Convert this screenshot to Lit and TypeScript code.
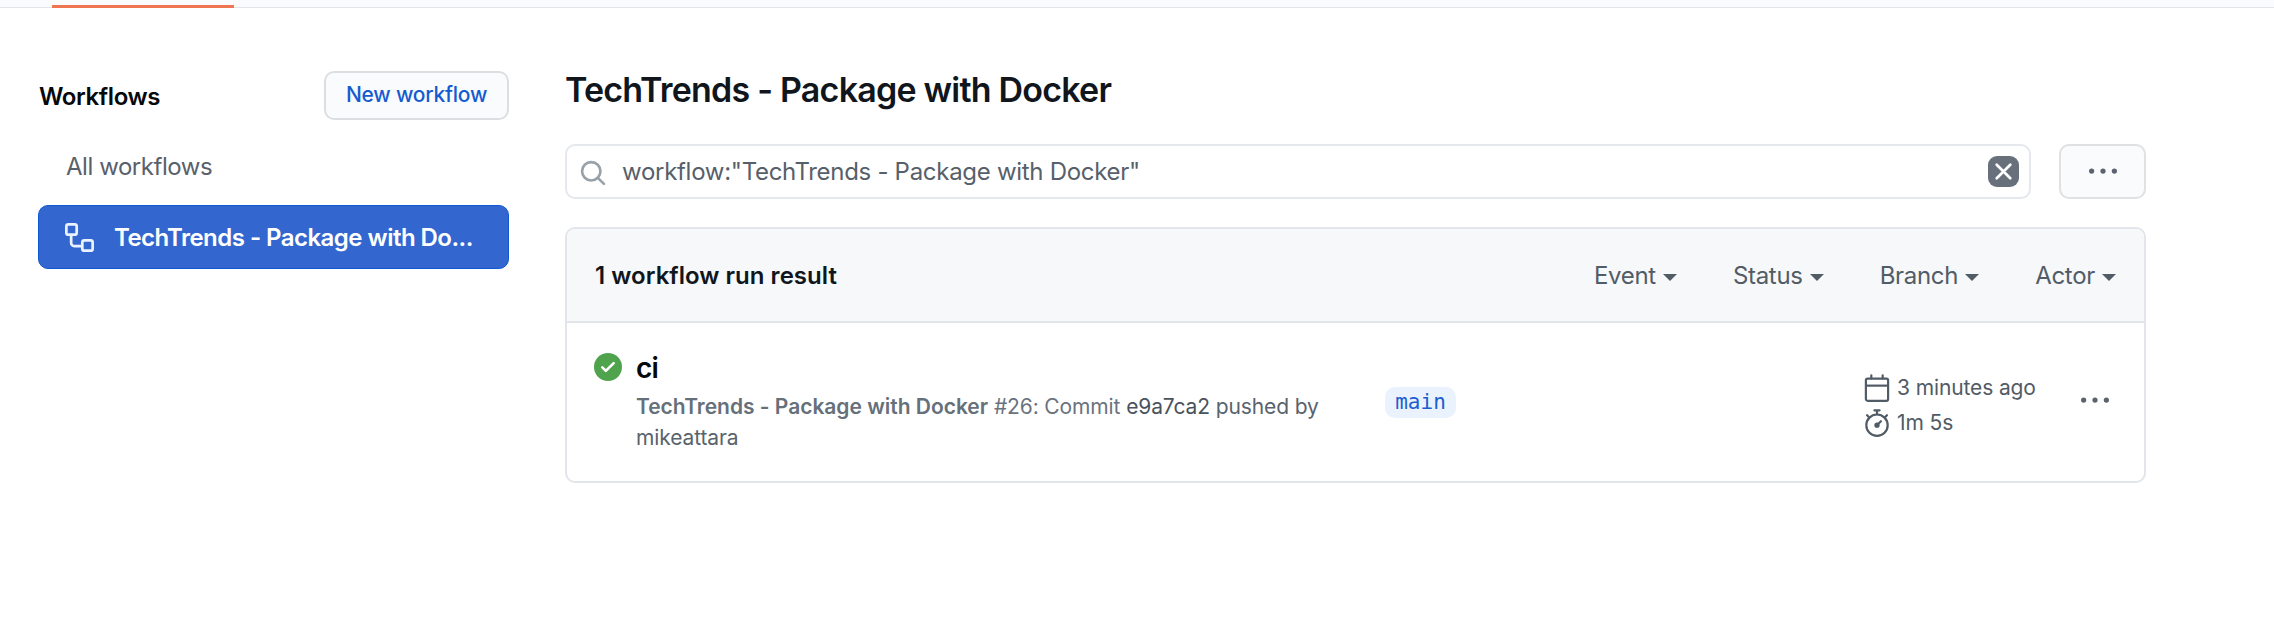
import { LitElement, html, css, svg } from "lit";
import { customElement } from "lit/decorators.js";

const filters = ["Event", "Status", "Branch", "Actor"];

const icon = (cls: string, body: unknown) =>
  html`<svg class="icon ${cls}" viewBox="0 0 16 16" fill="currentColor" aria-hidden="true">${body}</svg>`;

const workflowIcon = svg`<g fill="none" stroke="currentColor" stroke-width="1.5"><rect x=".75" y=".75" width="5.7" height="5.7" rx="1.1"/><rect x="9.55" y="9.55" width="5.7" height="5.7" rx="1.1"/><path d="M3.4 6.500V11A1.700 1.700 0 0 0 5.100 12.700H9.500"/></g>`;
const searchIcon = svg`<g fill="none" stroke="currentColor" stroke-width="1.5" stroke-linecap="round"><circle cx="7" cy="7" r="5.250"/><path d="M10.900 10.900L14.250 14.250"/></g>`;
const closeIcon = svg`<path fill="none" stroke="currentColor" stroke-width="1.5" stroke-linecap="round" d="M4.250 4.250L11.750 11.750M11.750 4.250L4.250 11.750"/>`;
const kebabIcon = svg`<circle cx="1.5" cy="8" r="1.5"/><circle cx="8" cy="8" r="1.5"/><circle cx="14.5" cy="8" r="1.5"/>`;
const checkIcon = svg`<circle cx="8" cy="8" r="8"/><path fill="none" stroke="#fff" stroke-width="1.5" stroke-linecap="round" stroke-linejoin="round" d="M4.750 8.250L6.750 10.250L11.250 5.750"/>`;
const calendarIcon = svg`<g fill="none" stroke="currentColor" stroke-width="1.25"><rect x="1.65" y="2.65" width="12.7" height="12.7" rx="1"/><path d="M1.650 6.650H14.350"/><path stroke-linecap="round" d="M4.750 .75V2.500M11.250 .75V2.500"/></g>`;
const stopwatchIcon = svg`<g fill="none" stroke="currentColor" stroke-width="1.25" stroke-linecap="round"><circle cx="8" cy="9.250" r="6.100"/><path d="M6.500 .75H9.500M8 .75V3M2.300 3.550L3.500 4.750M13.700 3.550L12.500 4.750M8.200 9.050L10.250 7"/></g><circle cx="8" cy="9.250" r="1.500"/>`;

@customElement("app-root")
export class AppRoot extends LitElement {
  static styles = css`
    :host {
      display: block;
      height: 622px;
      overflow: hidden;
      background: #fff;
      color: #10161c;
      font-family: Inter, sans-serif;
      font-size: 24px;
      line-height: 30px;
      white-space: nowrap;
    }
    * { box-sizing: border-box; }
    h1, h2, p { margin: 0; font-weight: 600; }
    button {
      font: inherit;
      color: inherit;
      margin: 0;
      padding: 0;
      border: 0;
      background: none;
    }
    .icon { display: block; flex: none; width: 28px; height: 28px; overflow: visible; }

    .nav { height: 8px; padding: 5px 0 0 52px; background: #fafbfc; border-bottom: 1px solid #e3e6e8; }
    .tab { width: 182px; height: 3px; background: #ee7650; }

    .page { display: flex; gap: 56px; padding-left: 38px; }
    .sidebar { width: 471px; padding-top: 63px; }
    .side-head { display: flex; justify-content: space-between; align-items: center; height: 49px; }
    .side-title { font-size: 24px; letter-spacing: -0.4px; padding: 3px 0 0 1px; color: #06090c; }
    .new {
      width: 185px;
      height: 49px;
      padding: 0 0 2px;
      border: 2px solid #dcdfe1;
      border-radius: 10px;
      background: #fafbfc;
      color: #155bd0;
      font-size: 21px;
      font-weight: 500;
      letter-spacing: -0.22px;
    }
    .all { display: block; margin-top: 32px; padding-left: 28px; letter-spacing: -0.45px; color: #58616b; }
    .selected {
      display: flex;
      align-items: center;
      height: 64px;
      margin-top: 23px;
      padding: 0 25px 0 26px;
      border: 1px solid #1058d0;
      border-radius: 10px;
      background: #3367cf;
      color: #fff;
      font-weight: 600;
      letter-spacing: -0.53px;
    }
    .selected span { padding-top: 1px; }
    .flow { width: 29px; height: 29px; margin-right: 20px; color: #eaf2ff; }

    .main { width: 1581px; padding-top: 62px; }
    .title { font-size: 34px; line-height: 40px; letter-spacing: -0.78px; }
    .tools { display: flex; gap: 28px; margin-top: 34px; }
    .search {
      display: flex;
      align-items: center;
      width: 1466px;
      height: 55px;
      padding: 0 10px 0 12px;
      border: 2px solid #e5e8ec;
      border-radius: 10px;
    }
    .lens { margin-top: 3px; color: #98a0a8; }
    .query { flex: 1; padding-left: 15px; letter-spacing: -0.29px; color: #57606a; }
    .clear {
      display: grid;
      place-items: center;
      width: 31px;
      height: 31px;
      border-radius: 9px;
      background: #68717b;
      color: #fff;
    }
    .x { width: 29px; height: 29px; }
    .more {
      display: grid;
      place-items: center;
      width: 87px;
      height: 55px;
      padding-bottom: 2px;
      border: 2px solid #dfe1e3;
      border-radius: 10px;
      background: #fafbfc;
      color: #5b646e;
    }

    .card { height: 256px; margin-top: 28px; border: 2px solid #e2e5e9; border-radius: 10px; overflow: hidden; }
    .card-head {
      display: flex;
      align-items: center;
      justify-content: space-between;
      height: 94px;
      padding: 1px 28px 0;
      background: #f6f8fa;
      border-bottom: 2px solid #e2e5e9;
    }
    .count { font-weight: 600; letter-spacing: 0.03px; }
    .filters { display: flex; gap: 56px; padding-top: 1px; color: #525c66; }
    .filter { display: flex; align-items: center; gap: 7px; letter-spacing: -0.3px; }
    .caret { border: 7px solid transparent; border-top-color: currentColor; border-bottom: 0; margin-top: 2px; }

    .run { display: grid; grid-template-columns: 42px 749px 478px 218px 29px; padding: 30px 0 0 27px; }
    .check { color: #4fa34c; }
    .run-title { font-size: 28px; letter-spacing: -0.8px; color: #06090c; }
    .sub { padding-top: 8px; width: 690px; font-size: 21px; font-weight: 400; line-height: 31px; letter-spacing: -0.12px; color: #6a737d; white-space: normal; }
    .sub b { font-weight: 600; letter-spacing: -0.02px; color: #66707a; }
    .sub a { color: #49535d; }
    .sub .by { color: #59636d; }
    .branch {
      justify-self: start;
      width: 71px;
      height: 31px;
      margin-top: 34px;
      border-radius: 10px;
      background: #eaf2fd;
      color: #1c5ed2;
      font: 21px/30px "DejaVu Sans Mono", monospace;
      text-align: center;
    }
    .times { padding-top: 17px; color: #515b65; font-size: 21px; letter-spacing: -0.12px; }
    .time { display: flex; align-items: center; gap: 6px; height: 35px; }
    .run-more { align-self: start; padding-top: 33px; color: #5b646e; }
  `;

  render() {
    return html`
      <div class="nav"><div class="tab"></div></div>
      <div class="page">
        <aside class="sidebar">
          <div class="side-head">
            <h2 class="side-title">Workflows</h2>
            <button class="new">New workflow</button>
          </div>
          <a class="all">All workflows</a>
          <a class="selected">${icon("flow", workflowIcon)}<span>TechTrends - Package with Do...</span></a>
        </aside>
        <main class="main">
          <h1 class="title">TechTrends - Package with Docker</h1>
          <div class="tools">
            <div class="search">
              ${icon("lens", searchIcon)}
              <span class="query">workflow:"TechTrends - Package with Docker"</span>
              <button class="clear" aria-label="Clear">${icon("x", closeIcon)}</button>
            </div>
            <button class="more" aria-label="More">${icon("", kebabIcon)}</button>
          </div>
          <section class="card">
            <div class="card-head">
              <span class="count">1 workflow run result</span>
              <div class="filters">
                ${filters.map((f) => html`<span class="filter">${f}<i class="caret"></i></span>`)}
              </div>
            </div>
            <div class="run">
              ${icon("check", checkIcon)}
              <div>
                <h2 class="run-title">ci</h2>
                <p class="sub"><b>TechTrends - Package with Docker</b> #26: Commit <a>e9a7ca2</a> <span class="by">pushed by</span> <a class="by">mikeattara</a></p>
              </div>
              <span class="branch">main</span>
              <div class="times">
                <div class="time">${icon("", calendarIcon)}<span>3 minutes ago</span></div>
                <div class="time">${icon("", stopwatchIcon)}<span>1m 5s</span></div>
              </div>
              <button class="run-more" aria-label="Run options">${icon("", kebabIcon)}</button>
            </div>
          </section>
        </main>
      </div>
    `;
  }
}
